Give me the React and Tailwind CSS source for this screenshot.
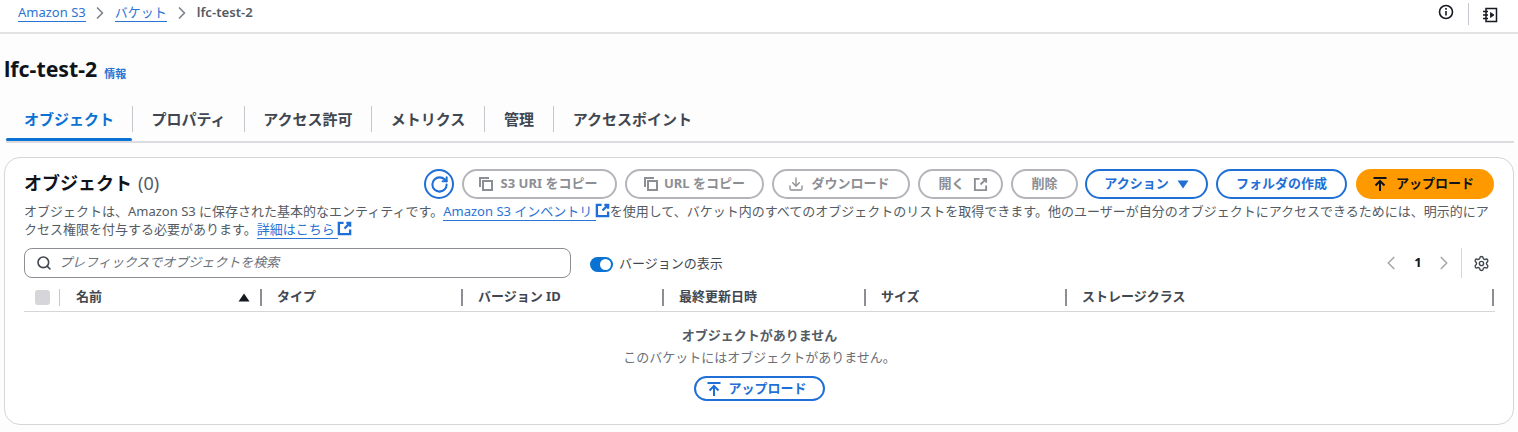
import React from "react";
import { ChevronRight, ChevronLeft, Search, Settings, RotateCw, Download } from "lucide-react";

const FONT = "font-['Noto_Sans','Noto_Sans_CJK_JP',sans-serif]";

const CopyIcon = () => (
  <svg width="16" height="16" viewBox="0 0 16 16" fill="none" stroke="currentColor" strokeWidth="2">
    <path d="M2 11V2h9" />
    <rect x="5" y="5" width="9" height="9" />
  </svg>
);
const ExtIcon = ({ size = 15, w = 2 }) => (
  <svg width={size} height={size} viewBox="0 0 16 16" fill="none" stroke="currentColor" strokeWidth={w}>
    <path d="M7 2H2v12h12V9" />
    <path d="M10 2h4v4M14 2L8 8" />
  </svg>
);
const UploadIcon = () => (
  <svg width="16" height="16" viewBox="0 0 16 16" fill="none" stroke="currentColor" strokeWidth="2">
    <path d="M1.5 2h13M8 15V5.5M3.5 9.5L8 5l4.5 4.5" />
  </svg>
);
const Caret = ({ className }) => (
  <svg width="12" height="9" viewBox="0 0 12 9" className={className} fill="currentColor">
    <path d="M0.5 0.5h11L6 8.5z" />
  </svg>
);
const DrawerIcon = () => (
  <svg width="16" height="16" viewBox="0 0 16 16" fill="none" stroke="currentColor" strokeWidth="1.5">
    <path d="M4 1.5h10.5v13H4z" />
    <path d="M1 4.5h5M1 8h5M1 11.5h5" />
    <path d="M8.5 5.5l3.5 2.5-3.5 2.5z" fill="currentColor" strokeWidth="0.8" />
  </svg>
);

const Disabled = ({ w, extra = "gap-2", children }) => (
  <button className={`${w} ${extra} h-[30px] shrink-0 rounded-full border-2 border-[#b4b4bb] bg-white flex items-center justify-center text-[13px] font-bold text-[#8d8d94]`}>
    {children}
  </button>
);
const Normal = ({ w, extra = "", children }) => (
  <button className={`${w} ${extra} h-[30px] shrink-0 rounded-full border-2 border-[#1f6fd6] bg-white flex items-center justify-center gap-2 text-[13px] font-bold text-[#1f6fd6]`}>
    {children}
  </button>
);

const Tab = ({ children, active, w }) => (
  <div className={`${w} h-[42px] pb-[2px] relative flex items-center justify-center text-[15px] font-bold ${active ? "text-[#0972d3]" : "text-[#414750]"}`}>
    <span>{children}</span>
    {active && <div className="absolute left-0 right-0 bottom-0 h-[3px] rounded-full bg-[#0972d3]" />}
  </div>
);
const TabSep = () => <div className="w-px h-[26px] bg-[#c6c6cd] self-center -mt-[3px]" />;

const Th = ({ w, children, caret }) => (
  <div className={`${w} shrink-0 h-full flex items-center pl-[15px] pr-[11px] text-[13px] font-bold text-[#414750]`}>
    <span className="flex-1">{children}</span>
    {caret && <Caret className="rotate-180 text-[#16191f] mr-[10px]" />}
    <div className="w-[2px] h-[17px] bg-[#8d8d94] -mr-[11px]" />
  </div>
);

const ExtLinkIcon = () => (
  <span className="inline-block align-[-2px] -ml-[1px] text-[#1f6fd6]"><ExtIcon size={15} w={2.5} /></span>
);

export default function App() {
  return (
    <div className={`${FONT} w-[1518px] h-[432px] overflow-hidden bg-[#fdfdfd] text-[#414750]`}>
      <header className="h-[34px] bg-white border-b-2 border-[#e3e3e6] flex items-start justify-between pl-[18px] pr-[20px]">
        <nav className="flex items-center h-[26px] text-[13px]">
          <a className="text-[#2a74d4] border-b border-[#2a74d4] leading-[17px]">Amazon S3</a>
          <ChevronRight size={20} className="ml-[4px] mr-[5px] text-[#7d8289]" strokeWidth={2} />
          <a className="text-[#2a74d4] border-b border-[#2a74d4] leading-[17px]">バケット</a>
          <ChevronRight size={20} className="ml-[5px] mr-[5px] text-[#7d8289]" strokeWidth={2} />
          <span className="font-semibold text-[13.2px] text-[#545b64]">lfc-test-2</span>
        </nav>
        <div className="flex items-center h-[24px] mt-[1px] text-[#16191f]">
          <svg width="16" height="16" viewBox="0 0 16 16" fill="none" stroke="currentColor" strokeWidth="1.6" className="-mt-[2px]">
            <circle cx="8" cy="8" r="6.5" />
            <path d="M8 7v4.5M8 4v1.8" />
          </svg>
          <div className="w-px h-[22px] bg-[#c6c6cd] ml-[14px] mr-[13px] mt-[1px]" />
          <div className="mt-[4px]"><DrawerIcon /></div>
        </div>
      </header>

      <div className="pl-[6px] pr-[4px]">
        <div className="flex items-end h-[50px] -ml-[2px]">
          <h1 className="text-[21.3px] leading-[30px] font-bold text-[#0f141a]">lfc-test-2</h1>
          <a className="ml-[7px] text-[11px] leading-[20px] font-bold text-[#2a74d4]">情報</a>
        </div>
        <div className="flex h-[44px] mt-[15px] border-b-2 border-[#dcdce0] items-end">
          <Tab active w="w-[126px]">オブジェクト</Tab>
          <TabSep />
          <Tab w="w-[111px]">プロパティ</Tab>
          <TabSep />
          <Tab w="w-[126px]">アクセス許可</Tab>
          <TabSep />
          <Tab w="w-[112px]">メトリクス</Tab>
          <TabSep />
          <Tab w="w-[68px]">管理</Tab>
          <TabSep />
          <Tab w="w-[157px]">アクセスポイント</Tab>
        </div>
      </div>

      <section className="mt-[14px] mx-[4px] w-[1510px] h-[268px] bg-white border border-[#d5d5da] rounded-2xl pt-[10px] pl-[19px] pr-[18px]">
        <div className="flex items-center h-[30px] mt-[1px] pr-[1px]">
          <div className="flex-1 flex items-baseline text-[18px] font-bold text-[#0f141a] -mt-[2px]">
            オブジェクト<span className="ml-[6px] font-normal text-[#545b64] text-[18px]">(0)</span>
          </div>
          <div className="flex items-center gap-[8px]">
            <button className="w-[30px] h-[30px] rounded-full border-2 border-[#1f6fd6] flex items-center justify-center text-[#1f6fd6]">
              <RotateCw size={19} strokeWidth={2.6} />
            </button>
            <Disabled w="w-[155px]" extra="gap-[7px] pr-[4px]"><CopyIcon />S3 URI をコピー</Disabled>
            <Disabled w="w-[139px]" extra="gap-[5px] pr-[1px]"><CopyIcon />URL をコピー</Disabled>
            <Disabled w="w-[138px]" extra="gap-[7px] pr-[4px]"><Download size={16} strokeWidth={2} />ダウンロード</Disabled>
            <Disabled w="w-[85px]" extra="gap-2 pl-[5px]">開く<ExtIcon /></Disabled>
            <Disabled w="w-[67px]" extra="">削除</Disabled>
            <Normal w="w-[123px]" extra="-ml-[1px]">アクション<Caret /></Normal>
            <Normal w="w-[131px]">フォルダの作成</Normal>
            <button className="w-[138px] h-[30px] ml-[1px] pr-[4px] rounded-full bg-[#ff9900] flex items-center justify-center gap-2 text-[13px] font-bold text-[#0f141a]">
              <UploadIcon />アップロード
            </button>
          </div>
        </div>
        <p className="mt-[3px] text-[13px] leading-[18px] text-[#545b64] w-[1472px]">
          オブジェクトは、Amazon S3 に保存された基本的なエンティティです。
          <a className="text-[#2a74d4] border-b border-[#2a74d4]">Amazon S3 インベントリ </a>
          <ExtLinkIcon />
          を使用して、バケット内のすべてのオブジェクトのリストを取得できます。他のユーザーが自分のオブジェクトにアクセスできるためには、明示的にアクセス権限を付与する必要があります。
          <a className="text-[#2a74d4] border-b border-[#2a74d4]">詳細はこちら </a>
          <ExtLinkIcon />
        </p>

        <div className="flex items-center mt-[10px] h-[30px]">
          <div className="w-[547px] h-[30px] rounded-lg border border-[#8d8d94] bg-white flex items-center pl-[11px] gap-[7px]">
            <Search size={16} strokeWidth={2.4} className="text-[#414750]" />
            <span className="italic text-[13px] text-[#6b7079]">プレフィックスでオブジェクトを検索</span>
          </div>
          <div className="ml-[19px] flex items-center mt-[2px]">
            <div className="w-[23px] h-[15px] rounded-full bg-[#0972d3] relative">
              <div className="absolute right-[2px] top-[2px] w-[11px] h-[11px] rounded-full bg-white" />
            </div>
            <span className="ml-[6px] text-[13px] text-[#414750]">バージョンの表示</span>
          </div>
          <div className="ml-auto flex items-center pr-[5px]">
            <ChevronLeft size={22} className="text-[#a8a8ae]" strokeWidth={1.8} />
            <span className="ml-[12px] mr-[11px] w-[8px] text-center text-[13px] font-bold text-[#0f141a]">1</span>
            <ChevronRight size={22} className="text-[#a8a8ae]" strokeWidth={1.8} />
            <div className="w-px h-[30px] bg-[#d5d5da] ml-[6px] mr-[11px]" />
            <Settings size={17} strokeWidth={2} className="text-[#414750]" />
          </div>
        </div>

        <div className="flex items-start pt-[7px] h-[34px] border-b border-[#d5d5da] w-[1471px]">
          <div className="w-[37px] shrink-0 flex items-center h-[24px]">
            <div className="ml-[11px] w-[15px] h-[15px] rounded-[3px] bg-[#d5d5da]" />
            <div className="ml-[9px] w-px h-[17px] bg-[#c6c6cd]" />
          </div>
          <div className="flex h-[24px]">
            <Th w="w-[201px]" caret>名前</Th>
            <Th w="w-[201px]">タイプ</Th>
            <Th w="w-[201px]">バージョン ID</Th>
            <Th w="w-[202px]">最終更新日時</Th>
            <Th w="w-[201px]">サイズ</Th>
            <Th w="w-[427px]">ストレージクラス</Th>
          </div>
        </div>

        <div className="flex flex-col items-center w-[1471px]">
          <div className="mt-[14px] text-[13px] leading-[18px] font-bold text-[#545b64]">オブジェクトがありません</div>
          <div className="mt-[4px] text-[13px] leading-[18px] text-[#6b7079]">このバケットにはオブジェクトがありません。</div>
          <button className="mt-[10px] w-[131px] h-[25px] pr-[6px] rounded-full border-2 border-[#1f6fd6] flex items-center justify-center gap-[6px] text-[13px] font-bold text-[#1f6fd6]">
            <UploadIcon />アップロード
          </button>
        </div>
      </section>
    </div>
  );
}
